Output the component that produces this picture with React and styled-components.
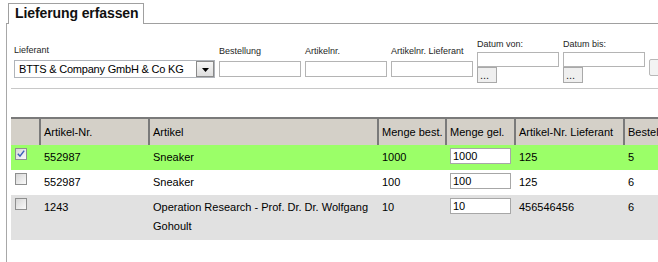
import React from 'react';
import styled, { createGlobalStyle } from 'styled-components';

const GlobalStyle = createGlobalStyle`
	html, body {
		margin: 0;
		padding: 0;
		background: #fff;
		overflow: hidden;
	}
	body {
		font-family: "Liberation Sans", Arial, sans-serif;
		color: #000;
	}
`;

const Page = styled.div`
	width: 720px;
	height: 262px;
	padding: 3px 0 0 6px;
	box-sizing: border-box;
`;

const TabStrip = styled.div`
	display: flex;
	height: 20px;
	padding-left: 2px;
	border-bottom: 1px solid #a0a0a0;
`;

const Tab = styled.div`
	height: 21px;
	margin-bottom: -1px;
	box-sizing: border-box;
	padding: 0 5px 0 6px;
	border: 1px solid #a0a0a0;
	border-bottom: none;
	background: #fff;
	font-size: 14px;
	font-weight: bold;
	line-height: 19px;
	letter-spacing: -0.1px;
	color: #111;
`;

const Panel = styled.div`
	border-left: 1px solid #a8a8a8;
	padding-left: 4px;
	height: 240px;
`;

const FilterBar = styled.div`
	display: flex;
	align-items: center;
	gap: 4px;
	padding: 14px 0 5px 3px;
	border-bottom: 1px solid #c8c8c8;
`;

const Field = styled.div`
	display: flex;
	flex-direction: column;
`;

const Label = styled.span`
	font-size: 9px;
	line-height: 12px;
	color: #1e1e1e;
	margin-bottom: ${p => (p.$tight ? 2 : 4)}px;
	white-space: nowrap;
`;

const TextInput = styled.input`
	width: 82px;
	height: ${p => (p.$short ? 15 : 16)}px;
	box-sizing: border-box;
	border: 1px solid #b4b4b4;
	padding: 0 2px;
	font: 11px "Liberation Sans", Arial, sans-serif;
	outline: none;
`;

const Select = styled.div`
	display: flex;
	width: 201px;
	height: 18px;
	box-sizing: border-box;
	border: 1px solid #b0b4ba;
	background: #fff;
`;

const SelectText = styled.span`
	flex: 1;
	font-size: 11px;
	line-height: 16px;
	letter-spacing: -0.2px;
	padding-left: 4px;
	white-space: nowrap;
	overflow: hidden;
`;

const DropButton = styled.span`
	display: flex;
	align-items: flex-end;
	justify-content: center;
	width: 18px;
	box-sizing: border-box;
	padding-bottom: 4px;
	border: 1px solid #8a8a8a;
	background: linear-gradient(#f6f6f6, #dedede);
`;

const DotsButton = styled.button`
	width: 20px;
	height: 16px;
	box-sizing: border-box;
	padding: 0 0 0 2px;
	border: 1px solid #a9a9a9;
	background: #efefef;
	font: 11px/12px "Liberation Sans", Arial, sans-serif;
	text-align: left;
	color: #222;
`;

const EdgeButton = styled.button`
	width: 60px;
	height: 17px;
	box-sizing: border-box;
	border: 1px solid #b8b8b8;
	border-radius: 2px;
	background: #f3f3f3;
	align-self: ${p => (p.$low ? 'flex-end' : 'auto')};
	margin-bottom: ${p => (p.$low ? 7 : 0)}px;
	flex-shrink: 0;
`;

const Toolbar = styled.div`
	display: flex;
	justify-content: flex-end;
	height: 28px;
	padding-top: 5px;
	box-sizing: border-box;
`;

const Grid = styled.table`
	width: 712px;
	table-layout: fixed;
	border-collapse: separate;
	border-spacing: 0;
	font-size: 11px;
`;

const HeadCell = styled.th`
	background: #d4d0c8;
	border-top: 2px solid #7a7a7a;
	border-left: ${p => (p.$first ? 'none' : '2px solid #7a7a7a')};
	padding: 0 3px;
	height: 26px;
	line-height: 26px;
	text-align: left;
	font-weight: normal;
	white-space: nowrap;
	overflow: hidden;
`;

const tones = { green: '#9bff68', white: '#ffffff', gray: '#e1e1e1' };

const Row = styled.tr`
	background: ${p => tones[p.$tone]};
`;

const Cell = styled.td`
	vertical-align: top;
	padding: 3px 3px ${p => (p.$tall ? 4 : 3)}px ${p => (p.$first ? 4 : 3)}px;
	border-left: ${p => (p.$first ? 'none' : '2px solid transparent')};
	line-height: 19px;
`;

const QtyInput = styled.input`
	display: block;
	width: 61px;
	height: 16px;
	box-sizing: border-box;
	border: 1px solid #a7a7a7;
	padding: 0 2px;
	font: 11px "Liberation Sans", Arial, sans-serif;
	background: #fff;
	outline: none;
`;

const Check = styled.span`
	display: block;
	width: 12px;
	height: 12px;
	box-sizing: border-box;
	border: 1px solid #8e8f8f;
	background: linear-gradient(135deg, #d6d6d6, #fafafa);

	svg {
		display: block;
	}
`;

const columns = [
	{ title: '', width: 28 },
	{ title: 'Artikel-Nr.', width: 109 },
	{ title: 'Artikel', width: 229 },
	{ title: 'Menge best.', width: 68 },
	{ title: 'Menge gel.', width: 69 },
	{ title: 'Artikel-Nr. Lieferant', width: 109 },
	{ title: 'Bestellung', width: 100 },
];

const rows = [
	{ checked: true, nr: '552987', name: 'Sneaker', ordered: '1000', delivered: '1000', supplierNr: '125', order: '5', tone: 'green' },
	{ checked: false, nr: '552987', name: 'Sneaker', ordered: '100', delivered: '100', supplierNr: '125', order: '6', tone: 'white' },
	{ checked: false, nr: '1243', name: 'Operation Research - Prof. Dr. Dr. Wolfgang Gohoult', ordered: '10', delivered: '10', supplierNr: '456546456', order: '6', tone: 'gray', tall: true },
];

const Checkbox = ({ checked }) => (
	<Check>
		{checked && (
			<svg width="10" height="10" viewBox="0 0 10 10">
				<path d="M1.8 4.8 L4 7.2 L8.2 1.6" fill="none" stroke="#3b5fb8" strokeWidth="1.5" />
			</svg>
		)}
	</Check>
);

const App = () => {
	return (
		<Page>
			<GlobalStyle />
			<TabStrip>
				<Tab>Lieferung erfassen</Tab>
			</TabStrip>
			<Panel>
				<FilterBar>
					<Field>
						<Label>Lieferant</Label>
						<Select>
							<SelectText>BTTS &amp; Company GmbH &amp; Co KG</SelectText>
							<DropButton>
								<svg width="7" height="4" viewBox="0 0 7 4">
									<path d="M0 0 H7 L3.5 4 Z" fill="#000" />
								</svg>
							</DropButton>
						</Select>
					</Field>
					<Field>
						<Label>Bestellung</Label>
						<TextInput />
					</Field>
					<Field>
						<Label>Artikelnr.</Label>
						<TextInput />
					</Field>
					<Field>
						<Label>Artikelnr. Lieferant</Label>
						<TextInput />
					</Field>
					<Field>
						<Label $tight>Datum von:</Label>
						<TextInput $short />
						<DotsButton>...</DotsButton>
					</Field>
					<Field>
						<Label $tight>Datum bis:</Label>
						<TextInput $short />
						<DotsButton>...</DotsButton>
					</Field>
					<EdgeButton $low />
				</FilterBar>
				<Toolbar>
					<EdgeButton />
				</Toolbar>
				<Grid>
					<colgroup>
						{columns.map((c, i) => (
							<col key={i} style={{ width: c.width }} />
						))}
					</colgroup>
					<thead>
						<tr>
							{columns.map((c, i) => (
								<HeadCell key={i} $first={i === 0}>{c.title}</HeadCell>
							))}
						</tr>
					</thead>
					<tbody>
						{rows.map((r, i) => (
							<Row key={i} $tone={r.tone}>
								<Cell $first $tall={r.tall}>
									<Checkbox checked={r.checked} />
								</Cell>
								<Cell $tall={r.tall}>{r.nr}</Cell>
								<Cell $tall={r.tall}>{r.name}</Cell>
								<Cell $tall={r.tall}>{r.ordered}</Cell>
								<Cell $tall={r.tall}>
									<QtyInput defaultValue={r.delivered} />
								</Cell>
								<Cell $tall={r.tall}>{r.supplierNr}</Cell>
								<Cell $tall={r.tall}>{r.order}</Cell>
							</Row>
						))}
					</tbody>
				</Grid>
			</Panel>
		</Page>
	);
};

export default App;
